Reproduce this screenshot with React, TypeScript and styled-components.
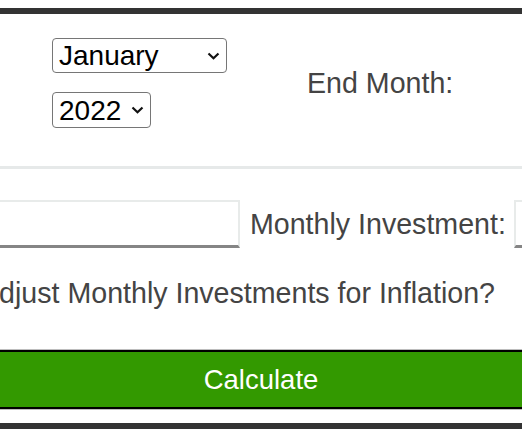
import React from "react";
import styled, { createGlobalStyle } from "styled-components";

const Global = createGlobalStyle`
  html, body { margin: 0; padding: 0; background: #fff; }
  body { padding: 8px 0; font-family: Arial, "Liberation Sans", sans-serif; overflow: hidden; }
`;

const Frame = styled.div`
  border-top: 6px solid #333;
  border-bottom: 6px solid #333;
  overflow: hidden;
  padding-bottom: 14px;
`;

const DateRow = styled.div`
  display: flex;
  align-items: center;
  padding: 24px 0 38px 52px;
  border-bottom: 3px solid #e6e9e9;
`;

const SelectStack = styled.div`
  display: flex;
  flex-direction: column;
  align-items: flex-start;
  gap: 19px;
`;

const SelectBox = styled.div`
  position: relative;
  display: inline-flex;
`;

const Select = styled.select<{ $w: number; $h: number }>`
  appearance: none;
  -webkit-appearance: none;
  box-sizing: border-box;
  width: ${(p) => p.$w}px;
  height: ${(p) => p.$h}px;
  font-family: Arial, "Liberation Sans", sans-serif;
  font-size: 28px;
  color: #000;
  background: #fff;
  border: 1px solid #767676;
  border-radius: 4px;
  padding: 0 0 0 6px;
  margin: 0;
  outline: none;
`;

const Chevron = styled.svg`
  position: absolute;
  right: 7px;
  top: 50%;
  margin-top: -4px;
  width: 13px;
  height: 8px;
  pointer-events: none;
`;

const Label = styled.span<{ $gap: number }>`
  font-size: 28.6px;
  color: #444;
  margin-left: ${(p) => p.$gap}px;
  white-space: nowrap;
`;

const InvestRow = styled.div`
  display: flex;
  align-items: center;
  padding-top: 31px;
`;

const TextInput = styled.input<{ $lead: number; $w: number }>`
  box-sizing: border-box;
  flex: none;
  width: ${(p) => p.$w}px;
  height: 48px;
  margin-left: ${(p) => p.$lead}px;
  border: 2px solid #e8ebea;
  border-bottom: 3px solid #858585;
  background: #fff;
  font-size: 24px;
  padding: 0 8px;
  outline: none;
`;

const InflationRow = styled.div`
  display: flex;
  align-items: center;
  padding-top: 29px;
  white-space: nowrap;
`;

const InflationText = styled.span`
  font-size: 28.6px;
  line-height: 33px;
  color: #444;
  margin-left: -20px;
`;

const ButtonRow = styled.div`
  padding-top: 40px;
  margin: 0 -20px;
`;

const CalcButton = styled.button`
  display: block;
  box-sizing: border-box;
  width: 100%;
  height: 59px;
  background: #339900;
  border: 2px solid #000;
  box-shadow: 0 0 0 1px #bdbdbd;
  color: #fff;
  font-family: Arial, "Liberation Sans", sans-serif;
  font-size: 27.5px;
  padding: 0;
  cursor: pointer;
`;

const months = [
  "January", "February", "March", "April", "May", "June",
  "July", "August", "September", "October", "November", "December",
];

function Dropdown({ w, h, value, options }: { w: number; h: number; value: string; options: string[] }) {
  return (
    <SelectBox>
      <Select $w={w} $h={h} defaultValue={value}>
        {options.map((o) => (
          <option key={o}>{o}</option>
        ))}
      </Select>
      <Chevron viewBox="0 0 13 8">
        <polyline points="1.5,1.5 6.5,6.2 11.5,1.5" fill="none" stroke="#111" strokeWidth="2.2" />
      </Chevron>
    </SelectBox>
  );
}

export default function App() {
  return (
    <>
      <Global />
      <Frame>
        <DateRow>
          <SelectStack>
            <Dropdown w={175} h={35} value="January" options={months} />
            <Dropdown w={99} h={36} value="2022" options={["2020", "2021", "2022", "2023", "2024"]} />
          </SelectStack>
          <Label $gap={80}>End Month:</Label>
        </DateRow>
        <InvestRow>
          <TextInput $lead={-20} $w={260} type="text" />
          <Label $gap={10}>Monthly Investment:</Label>
          <TextInput $lead={8} $w={200} type="text" />
        </InvestRow>
        <InflationRow>
          <InflationText>Adjust Monthly Investments for Inflation?</InflationText>
        </InflationRow>
        <ButtonRow>
          <CalcButton type="button">Calculate</CalcButton>
        </ButtonRow>
      </Frame>
    </>
  );
}
